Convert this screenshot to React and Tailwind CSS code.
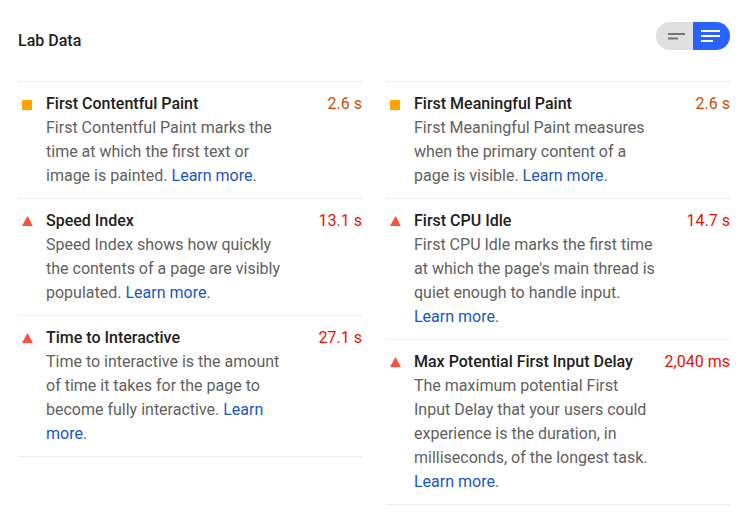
const metrics = {
  left: [
    {
      title: "First Contentful Paint",
      value: "2.6 s",
      level: "average",
      desc: "First Contentful Paint marks the time at which the first text or image is painted.",
    },
    {
      title: "Speed Index",
      value: "13.1 s",
      level: "fail",
      desc: "Speed Index shows how quickly the contents of a page are visibly populated.",
    },
    {
      title: "Time to Interactive",
      value: "27.1 s",
      level: "fail",
      desc: "Time to interactive is the amount of time it takes for the page to become fully interactive.",
    },
  ],
  right: [
    {
      title: "First Meaningful Paint",
      value: "2.6 s",
      level: "average",
      desc: "First Meaningful Paint measures when the primary content of a page is visible.",
    },
    {
      title: "First CPU Idle",
      value: "14.7 s",
      level: "fail",
      desc: "First CPU Idle marks the first time at which the page's main thread is quiet enough to handle input.",
    },
    {
      title: "Max Potential First Input Delay",
      value: "2,040 ms",
      level: "fail",
      desc: "The maximum potential First Input Delay that your users could experience is the duration, in milliseconds, of the longest task.",
    },
  ],
};

function StatusIcon({ level }) {
  if (level === "average") {
    return <span className="block w-[10px] h-[10px] bg-[#ffa400] ml-1 mt-[8px]" />;
  }
  return (
    <svg className="ml-1 mt-[7px]" width="11" height="10" viewBox="0 0 11 10">
      <polygon points="5.5,0 11,10 0,10" fill="#ff4e42" />
    </svg>
  );
}

function Metric({ title, value, level, desc }) {
  return (
    <div className="border-b border-[#ebebeb] py-[10px] grid grid-cols-[28px_10fr_3fr] leading-6">
      <div>
        <StatusIcon level={level} />
      </div>
      <div className="text-[#212121] font-medium whitespace-nowrap">{title}</div>
      <div
        className={
          "text-right font-normal whitespace-nowrap " +
          (level === "average" ? "text-[#d04900]" : "text-[#eb0f00]")
        }
      >
        {value}
      </div>
      <div />
      <div className="text-[#616161]">
        {desc}{" "}
        <a href="#" className="text-[#1a56c4]">
          Learn more
        </a>
        .
      </div>
    </div>
  );
}

function Toggle() {
  return (
    <div className="flex h-[28px] w-[74px] rounded-full overflow-hidden">
      <button className="w-[37px] bg-[#e0e0e0] flex items-center justify-end pr-[8px]">
        <svg width="17" height="7" viewBox="0 0 17 7">
          <rect x="0" y="0" width="17" height="2" fill="#757575" />
          <rect x="0" y="4.5" width="10" height="2" fill="#757575" />
        </svg>
      </button>
      <button className="w-[37px] bg-[#2962ff] flex items-center justify-start pl-[8px]">
        <svg width="19" height="12" viewBox="0 0 19 12">
          <rect x="0" y="0" width="19" height="2" fill="#fff" />
          <rect x="0" y="5" width="19" height="2" fill="#fff" />
          <rect x="0" y="10" width="12" height="2" fill="#fff" />
        </svg>
      </button>
    </div>
  );
}

export default function App() {
  return (
    <div className="w-[753px] h-[513px] bg-white pl-[18px] pr-[23px] pt-[22px] text-[16px] font-['Roboto',sans-serif]">
      <div className="flex items-start justify-between h-[28px] mb-[31px]">
        <h2 className="mt-[7px] text-[16px] leading-6 font-medium text-[#212121]">Lab Data</h2>
        <Toggle />
      </div>
      <div className="grid grid-cols-2 gap-x-6">
        {["left", "right"].map((side) => (
          <div key={side} className="border-t border-[#ebebeb]">
            {metrics[side].map((m) => (
              <Metric key={m.title} {...m} />
            ))}
          </div>
        ))}
      </div>
    </div>
  );
}
